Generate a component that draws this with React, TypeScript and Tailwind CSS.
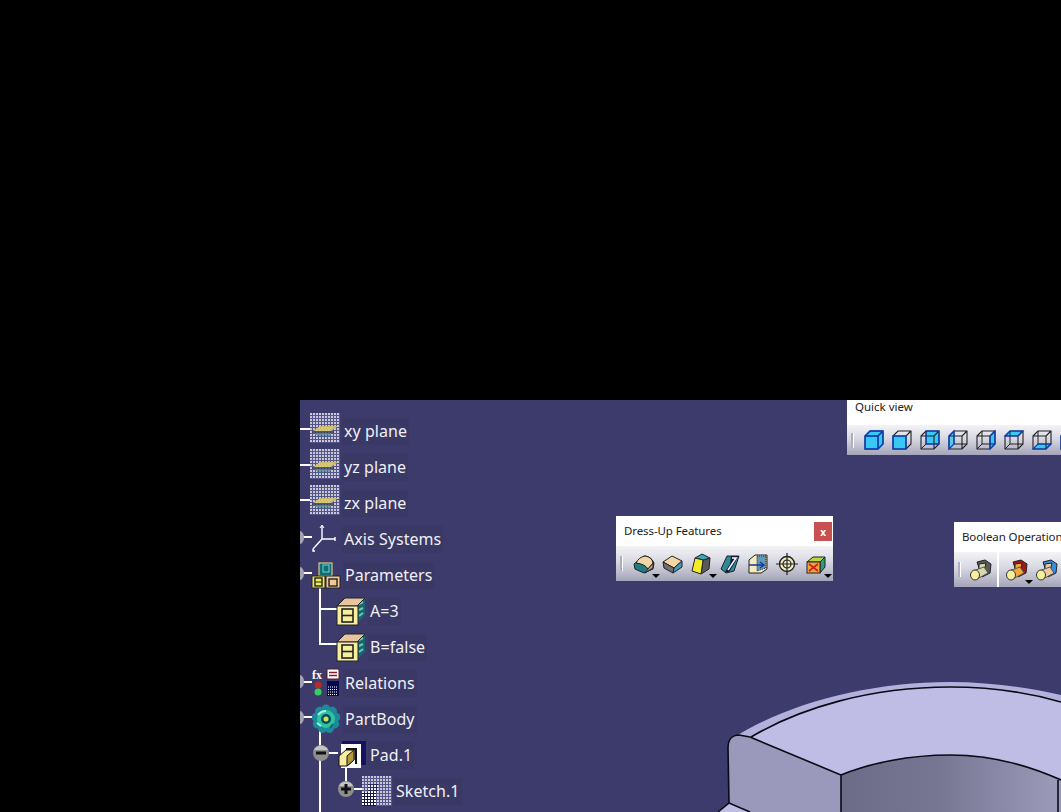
import React from "react";

const Plane = () => (
  <svg width="30" height="30" viewBox="0 0 30 30">
    <defs>
      <pattern id="chk" width="3" height="3" patternUnits="userSpaceOnUse">
        <rect width="3" height="3" fill="#55558c" />
        <rect width="2" height="2" fill="#c8c8d6" />
      </pattern>
    </defs>
    <rect width="30" height="30" fill="url(#chk)" />
    <path d="M2 19 L10 13 L28 13 L20 19 Z" fill="#c9b96a" />
    <path d="M8 15 H22 M6 17 H20" stroke="#e8dc90" strokeDasharray="2 1" />
    <path d="M2 19 H24" stroke="#2c2c4a" strokeWidth="1.4" />
    <path d="M5 21 H21" stroke="#4f8f8c" strokeWidth="1.4" />
    <path d="M7 23 H20" stroke="#3f5d90" strokeWidth="1" />
  </svg>
);

const Axis = () => (
  <svg width="30" height="30" viewBox="0 0 30 30" fill="none" stroke="#fff">
    <path d="M12 15 V2 M12 15 L25 15 M12 15 L3 25" strokeWidth="1.4" />
    <path d="M10 4 L12 1 L14 4" strokeWidth="1" />
    <path d="M3 25 V27 H5" strokeWidth="1.4" />
    <path d="M25 13 V17" strokeWidth="1.4" />
  </svg>
);

const Params = () => (
  <svg width="30" height="30" viewBox="0 0 30 30">
    <rect x="8" y="3" width="13" height="13" fill="#0f6d74" stroke="#f2e48a" />
    <rect x="12" y="5" width="6" height="7" fill="none" stroke="#7fd0d0" />
    <rect x="1" y="16" width="13" height="12" fill="#efe85a" stroke="#222" />
    <rect x="4" y="18" width="7" height="8" fill="none" stroke="#222" strokeWidth="1.4" />
    <path d="M4 22 H11" stroke="#222" />
    <rect x="15" y="16" width="14" height="12" fill="#f1c79a" stroke="#222" />
    <rect x="18" y="19" width="8" height="7" fill="none" stroke="#222" strokeWidth="1.4" />
  </svg>
);

const ParamCube = () => (
  <svg width="30" height="30" viewBox="0 0 30 30">
    <path d="M21 3 L29 1 V19 L21 28 Z" fill="#17686e" />
    <path d="M23 8 L27 6 M23 14 L27 12 M23 20 L27 17" stroke="#6cc8bc" strokeWidth="2" />
    <path d="M1 10 L9 2 H29 L21 10 Z" fill="#e8c4a0" stroke="#222" />
    <rect x="1" y="10" width="21" height="19" fill="#f7ed9c" stroke="#222" />
    <rect x="6" y="13" width="11" height="13" fill="none" stroke="#222" strokeWidth="1.6" />
    <path d="M6 19.5 H17" stroke="#222" strokeWidth="1.6" />
  </svg>
);

const RelationsIcon = () => (
  <svg width="30" height="30" viewBox="0 0 30 30">
    <text x="1" y="11" fontSize="12" fontWeight="700" fill="#fff" fontFamily="Liberation Serif, serif">fx</text>
    <rect x="16" y="1" width="12" height="10" fill="#fff" stroke="#5a1a2a" />
    <path d="M18 4.5 H26 M18 7.5 H26" stroke="#7a2030" strokeWidth="1.4" />
    <circle cx="7" cy="17" r="3.5" fill="#b52a2a" />
    <circle cx="7" cy="24" r="3.5" fill="#35d05a" />
    <rect x="16" y="13" width="12" height="15" fill="#08084e" />
    <path d="M17 19 H27 M17 21.5 H27 M17 24 H27 M17 26.5 H27" stroke="#fff" strokeDasharray="1 1" />
  </svg>
);

const Gear = () => (
  <svg width="28" height="30" viewBox="0 0 28 30">
    <g fill="#1c8a9a">
      {[0, 40, 80, 120, 160, 200, 240, 280, 320].map((a) => (
        <ellipse key={a} cx="14" cy="5" rx="4.5" ry="4.5" transform={`rotate(${a} 14 15)`} />
      ))}
    </g>
    <circle cx="14" cy="15" r="9" fill="#2cc4a0" />
    <path d="M6 11 Q9 7 14 7 M5 19 L9 22" stroke="#a8f0e4" strokeWidth="2" fill="none" />
    <circle cx="14" cy="15" r="5" fill="#0c4a5c" />
    <circle cx="14" cy="15" r="2.5" fill="#c8e85c" />
    <path d="M21 20 L18 24" stroke="#106a70" strokeWidth="2" />
  </svg>
);

const Pad = () => (
  <svg width="30" height="30" viewBox="0 0 30 30">
    <rect x="6" y="1" width="24" height="24" fill="#16125e" />
    <path d="M5 4 H25 V28 H5 Z" fill="#fff" />
    <path d="M3 16 L10 10 H18 V20 L11 26 H3 Z" fill="#f7ed9c" stroke="#111" />
    <path d="M11 16 L18 10 V20 L11 26 Z" fill="#b89a3c" stroke="#111" />
    <path d="M10 9 H20 V24" fill="none" stroke="#111" strokeWidth="2" />
  </svg>
);

const SketchIcon = () => (
  <svg width="30" height="30" viewBox="0 0 30 30">
    <defs>
      <pattern id="chk2" width="3" height="3" patternUnits="userSpaceOnUse">
        <rect width="3" height="3" fill="#55558c" />
        <rect width="2" height="2" fill="#c8c8d6" />
      </pattern>
      <pattern id="grid2" width="3" height="3" patternUnits="userSpaceOnUse">
        <rect width="3" height="3" fill="#15154a" />
        <rect width="2" height="2" fill="#fff" />
      </pattern>
    </defs>
    <rect width="30" height="30" fill="url(#chk2)" />
    <rect x="0" y="16" width="14" height="14" fill="url(#grid2)" />
    <rect x="6" y="8" width="10" height="8" fill="url(#grid2)" opacity="0.7" />
  </svg>
);

const cyan = "#38c8f6";

type Face = "all" | "front" | "back" | "left" | "right" | "top" | "bottom";

const Cube = ({ face }: { face: Face }) => (
  <svg width="22" height="22" viewBox="0 0 22 22" fill="none">
    {face === "back" && <rect x="7" y="2" width="13" height="13" fill={cyan} />}
    {face === "left" && <path d="M2 7 L7 2 V15 L2 20 Z" fill={cyan} fillOpacity="0.8" />}
    {face === "right" && <path d="M15 7 L20 2 V15 L15 20 Z" fill={cyan} />}
    {face === "top" && <path d="M2 7 L7 2 H20 L15 7 Z" fill={cyan} />}
    {face === "bottom" && <path d="M2 20 L7 15 H20 L15 20 Z" fill={cyan} />}
    {face === "all" && <path d="M2 7 L7 2 H20 V15 L15 20 H2 Z" fill={cyan} />}
    {face !== "all" && face !== "front" && <path d="M7 2 V15 H20 M7 15 L2 20" stroke="#222" />}
    {face === "front" && <rect x="2" y="7" width="13" height="13" fill={cyan} />}
    <path d="M2 7 L7 2 H20 V15 L15 20 H2 Z M2 7 H15 V20 M15 7 L20 2" stroke="#222" strokeWidth="1.1" />
    {face === "all" && <path d="M2 7 L7 2 H20 V15 L15 20 H2 Z M2 7 H15 V20 M15 7 L20 2" stroke="#0b3fc0" strokeWidth="1.3" />}
    {face === "front" && <rect x="2" y="7" width="13" height="13" stroke="#0b3fc0" strokeWidth="1.3" />}
    {face === "back" && <rect x="7" y="2" width="13" height="13" stroke="#0b3fc0" strokeWidth="1.2" />}
    {face === "left" && <path d="M2 7 L7 2 V15 L2 20 Z" stroke="#0b3fc0" strokeWidth="1.2" />}
    {face === "right" && <path d="M15 7 L20 2 V15 L15 20 Z" stroke="#0b3fc0" strokeWidth="1.2" />}
    {face === "top" && <path d="M2 7 L7 2 H20 L15 7 Z" stroke="#0b3fc0" strokeWidth="1.2" />}
    {face === "bottom" && <path d="M2 20 L7 15 H20 L15 20 Z" stroke="#0b3fc0" strokeWidth="1.2" />}
  </svg>
);

const Fillet = () => (
  <svg width="22" height="22" viewBox="0 0 22 22">
    <path d="M1 11 L11 3 Q18 3 21 10 L20 16 L11 20 L2 16 Z" fill="#1f7c80" stroke="#222" />
    <path d="M3 10 Q6 4 12 3 Q19 4 20 10 L15 16 Q12 11 3 10 Z" fill="#f2d6a4" stroke="#222" />
    <path d="M15 16 L20 10 V15 L12 20 Z" fill="#c89a88" stroke="#222" />
  </svg>
);

const Chamfer = () => (
  <svg width="22" height="22" viewBox="0 0 22 22">
    <path d="M2 9 L11 3 L21 8 L13 15 Z" fill="#f2d6a4" stroke="#222" />
    <path d="M2 9 L13 15 L12 20 L3 15 Z" fill="#707070" stroke="#222" />
    <path d="M13 15 L21 8 V14 L12 20 Z" fill="#3f9cb8" stroke="#222" />
  </svg>
);

const Draft = () => (
  <svg width="22" height="22" viewBox="0 0 22 22">
    <path d="M13 7 L20 5 L19 16 L11 21 Z" fill="#5a5a5a" stroke="#222" />
    <path d="M5 5 L12 1 L20 5 L13 7 Z" fill="#35a8c0" stroke="#222" />
    <path d="M5 5 L13 7 L11 21 L2 18 Z" fill="#f2ec28" stroke="#222" />
  </svg>
);

const Shell = () => (
  <svg width="22" height="22" viewBox="0 0 22 22">
    <path d="M2 16 L8 3 H20 L15 18 L7 20 Z" fill="#2c8a96" stroke="#222" />
    <path d="M12 3 H19 L15 11 L10 19 H6 L11 11 Z" fill="#14143c" />
    <path d="M13 5 H17 L13 11 L9 17" fill="none" stroke="#fff" strokeWidth="1.5" />
  </svg>
);

const Thick = () => (
  <svg width="22" height="22" viewBox="0 0 22 22">
    <path d="M2 7 L8 2 H20 V16 L14 20 H2 Z" fill="#f3ecc0" stroke="#222" />
    <path d="M10 3 H19 V15 L10 18 Z" fill="#5f9ab8" stroke="#223" strokeDasharray="1 1" />
    <path d="M2 12 H16 M13 9 L17 12 L13 15" fill="none" stroke="#2030a0" strokeWidth="1.4" />
  </svg>
);

const Target = () => (
  <svg width="22" height="22" viewBox="0 0 22 22" fill="none" stroke="#222">
    <circle cx="11" cy="11" r="7.5" fill="#f3ecc0" strokeWidth="1.4" />
    <circle cx="11" cy="11" r="4" strokeWidth="1.2" />
    <path d="M11 0 V22 M0 11 H22" strokeWidth="1.2" />
  </svg>
);

const RemoveFace = () => (
  <svg width="22" height="22" viewBox="0 0 22 22">
    <path d="M2 9 L8 4 H20 L15 9 Z" fill="#b8d840" stroke="#222" />
    <path d="M15 9 L20 4 V14 L15 20 Z" fill="#2e9a78" stroke="#222" />
    <rect x="2" y="9" width="13" height="11" fill="#f2a23a" stroke="#222" />
    <path d="M4 11 L13 18 M13 11 L4 18" stroke="#c8201c" strokeWidth="1.6" />
  </svg>
);

const Bool = ({ body, accent }: { body: string; accent: string }) => (
  <svg width="24" height="24" viewBox="0 0 24 24">
    <path d="M8 4 L16 2 L22 6 L21 15 L13 19 Z" fill={accent} stroke="#222" />
    <path d="M10 6 L17 5 L15 13 L10 13 Z" fill={body} stroke="#222" />
    <path d="M4 13 L15 9 L19 15 L8 21 Z" fill={body} stroke="#555" />
    <ellipse cx="6" cy="17" rx="4.5" ry="5" fill="#f6ef9c" stroke="#333" />
  </svg>
);

const Arrow = () => (
  <span className="absolute -right-[4px] bottom-[-2px] h-0 w-0 border-x-[4px] border-t-[4px] border-x-transparent border-t-black" />
);

const Tool = ({ children, menu }: { children: React.ReactNode; menu?: boolean }) => (
  <div className="relative flex h-6 w-6 shrink-0 items-center justify-center">
    {children}
    {menu && <Arrow />}
  </div>
);

const Grip = () => <div className="mr-[5px] h-[15px] w-[2px] shrink-0 self-center bg-[#aeaec0] shadow-[1px_0_0_#fff]" />;

const barFill = "bg-[linear-gradient(180deg,#f4f4f7_0%,#d8d8e2_45%,#a4a4ba_100%)]";

const Row = ({
  indent,
  icon,
  label,
  iconClass,
}: {
  indent: string;
  icon: React.ReactNode;
  label: string;
  iconClass?: string;
}) => (
  <div className={`flex h-9 items-center ${indent}`}>
    <div className={`flex h-[30px] w-[30px] shrink-0 items-center justify-center ${iconClass ?? ""}`}>{icon}</div>
    <span className="ml-[2px] flex h-[27px] items-center bg-[#3a3865] px-[2px] font-['Noto_Sans',sans-serif] text-[16px] tracking-[0.05px] text-[#f0f0f6]">
      {label}
    </span>
  </div>
);

const Knob = ({ cx, cy, sign }: { cx: number; cy: number; sign?: "minus" | "plus" }) => (
  <g>
    <circle cx={cx} cy={cy} r="8" fill="#8e8e8e" />
    <path d={`M${cx - 7} ${cy - 3} A8 8 0 0 1 ${cx + 7} ${cy - 3} Z`} fill="#c4c4c4" />
    {sign && <path d={`M${cx - 5} ${cy} H${cx + 5}`} stroke="#111" strokeWidth="3" />}
    {sign === "plus" && <path d={`M${cx} ${cy - 5} V${cy + 5}`} stroke="#111" strokeWidth="3" />}
  </g>
);

export default function App() {
  return (
    <div className="h-[812px] w-full overflow-hidden bg-black pl-[300px] pt-[400px]">
      <div className="relative h-[412px] w-[761px] overflow-hidden bg-[#3d3b6b]">
        {/* tree connectors */}
        <svg className="absolute left-0 top-0" width="180" height="412" viewBox="300 400 180 412" fill="none">
          <g stroke="#fff" strokeWidth="2">
            <path d="M300 429 H311 M300 465 H311 M300 500 H311" />
            <path d="M303 537 H312 M303 573 H312 M303 682 H312 M303 717 H312" />
            <path d="M320 585 V644 H337 M320 609 H337" />
            <path d="M320 730 V812 M329 753 H338 M346 765 V788 M354 789 H362" />
          </g>
          <g fill="#a2a2b0">
            <path d="M300 531 A4 6.5 0 0 1 300 544 Z" />
            <path d="M300 567 A4 6.5 0 0 1 300 580 Z" />
            <path d="M300 675 A4 6.5 0 0 1 300 688 Z" />
            <path d="M300 711 A4 6.5 0 0 1 300 724 Z" />
          </g>
          <Knob cx={321} cy={753} sign="minus" />
          <Knob cx={346} cy={789} sign="plus" />
        </svg>

        {/* spec tree */}
        <div className="relative pt-[13px]">
          <Row indent="pl-[10px]" iconClass="-mt-[6px]" icon={<Plane />} label="xy plane" />
          <Row indent="pl-[10px]" iconClass="-mt-[6px]" icon={<Plane />} label="yz plane" />
          <Row indent="pl-[10px]" iconClass="-mt-[6px]" icon={<Plane />} label="zx plane" />
          <Row indent="pl-[10px]" icon={<Axis />} label="Axis Systems" />
          <Row indent="pl-[11px]" icon={<Params />} label="Parameters" />
          <Row indent="pl-[36px]" icon={<ParamCube />} label="A=3" />
          <Row indent="pl-[36px]" icon={<ParamCube />} label="B=false" />
          <Row indent="pl-[11px]" icon={<RelationsIcon />} label="Relations" />
          <Row indent="pl-[11px]" icon={<Gear />} label="PartBody" />
          <Row indent="pl-[36px]" icon={<Pad />} label="Pad.1" />
          <Row indent="pl-[62px]" icon={<SketchIcon />} label="Sketch.1" />
        </div>

        {/* part geometry */}
        <svg className="absolute left-[400px] top-[270px]" width="361" height="142" viewBox="700 670 361 142">
          <path d="M738 735 C790 703 870 682 950 682 C990 682 1030 688 1061 695 V782 L841 776 L750 737 Z" fill="#b3b1dc" />
          <path d="M751 737 C800 708 870 687 950 687 C990 687 1030 693 1061 702 V782 C1030 768 990 755 950 755 C910 755 870 763 841 775 Z" fill="#bfbde6" />
          <defs>
            <linearGradient id="inner" x1="0" x2="1" y1="0" y2="0">
              <stop offset="0" stopColor="#6d6c88" />
              <stop offset="0.45" stopColor="#777693" />
              <stop offset="1" stopColor="#9c9bba" />
            </linearGradient>
          </defs>
          <path d="M841 775 C870 763 910 755 950 755 C990 755 1030 766 1061 780 V812 H841 Z" fill="url(#inner)" />
          <path d="M750 737 L841 775 V812 H750 L729 803 L728 748 C728 740 732 735 739 735 Z" fill="#9a98bb" />
          <path d="M718 812 L730 803 L750 812 Z" fill="#bfbde6" />
          <g fill="none" stroke="#0a0a14" strokeWidth="1.6">
            <path d="M751 737 C800 708 870 687 950 687 C990 687 1030 693 1061 702" />
            <path d="M841 775 C870 763 910 755 950 755 C990 755 1030 766 1061 780" />
            <path d="M750 737 L841 775 V812" />
            <path d="M750 737 L739 735 C732 735 728 740 728 748 L729 803 L750 812 M729 803 L718 812" />
            <path d="M1058 780 V812" />
          </g>
        </svg>

        {/* Quick view toolbar */}
        <div className="absolute left-[547px] top-0 flex h-[55px] w-[214px] flex-col overflow-hidden bg-white font-['Noto_Sans',sans-serif]">
          <div className="flex h-[25px] shrink-0 items-start pl-2 text-[11.5px] leading-[14px] text-[#222]">Quick view</div>
          <div className={`flex flex-1 items-center gap-1 pl-[4px] ${barFill}`}>
            <Grip />
            <Tool><Cube face="all" /></Tool>
            <Tool><Cube face="front" /></Tool>
            <Tool><Cube face="back" /></Tool>
            <Tool><Cube face="left" /></Tool>
            <Tool><Cube face="right" /></Tool>
            <Tool><Cube face="top" /></Tool>
            <Tool><Cube face="bottom" /></Tool>
            <Tool><Cube face="all" /></Tool>
          </div>
        </div>

        {/* Dress-Up Features toolbar */}
        <div className="absolute left-[316px] top-[116px] flex h-[65px] w-[217px] flex-col bg-white font-['Noto_Sans',sans-serif]">
          <div className="flex h-[30px] shrink-0 items-center justify-between pl-2 pr-[1px] text-[11.5px] tracking-[-0.1px] text-[#222]">
            <span>Dress-Up Features</span>
            <span className="mt-[1px] flex h-[19px] w-[18px] items-center justify-center bg-[#c75050] text-[10px] font-bold leading-none text-white">x</span>
          </div>
          <div className={`flex flex-1 items-center gap-[4.67px] pl-[4px] ${barFill}`}>
            <Grip />
            <Tool menu><Fillet /></Tool>
            <Tool><Chamfer /></Tool>
            <Tool menu><Draft /></Tool>
            <Tool><Shell /></Tool>
            <Tool><Thick /></Tool>
            <Tool><Target /></Tool>
            <Tool menu><RemoveFace /></Tool>
          </div>
        </div>

        {/* Boolean Operations toolbar */}
        <div className="absolute left-[654px] top-[122px] flex h-[65px] w-[107px] flex-col overflow-hidden bg-white font-['Noto_Sans',sans-serif]">
          <div className="flex h-[30px] shrink-0 items-center whitespace-nowrap pl-2 text-[11.5px] tracking-[-0.1px] text-[#222]">Boolean Operations</div>
          <div className={`flex flex-1 items-center pl-[4px] ${barFill}`}>
            <Grip />
            <div className="w-[4px] shrink-0" />
            <Tool><Bool body="#d8d8b0" accent="#5a5a5a" /></Tool>
            <div className="ml-[4px] mr-[6px] h-[35px] w-[2px] shrink-0 bg-white" />
            <Tool menu><Bool body="#f2a83a" accent="#a01818" /></Tool>
            <div className="w-[6px] shrink-0" />
            <Tool><Bool body="#f0c8a0" accent="#2f8fe0" /></Tool>
          </div>
        </div>
      </div>
    </div>
  );
}
